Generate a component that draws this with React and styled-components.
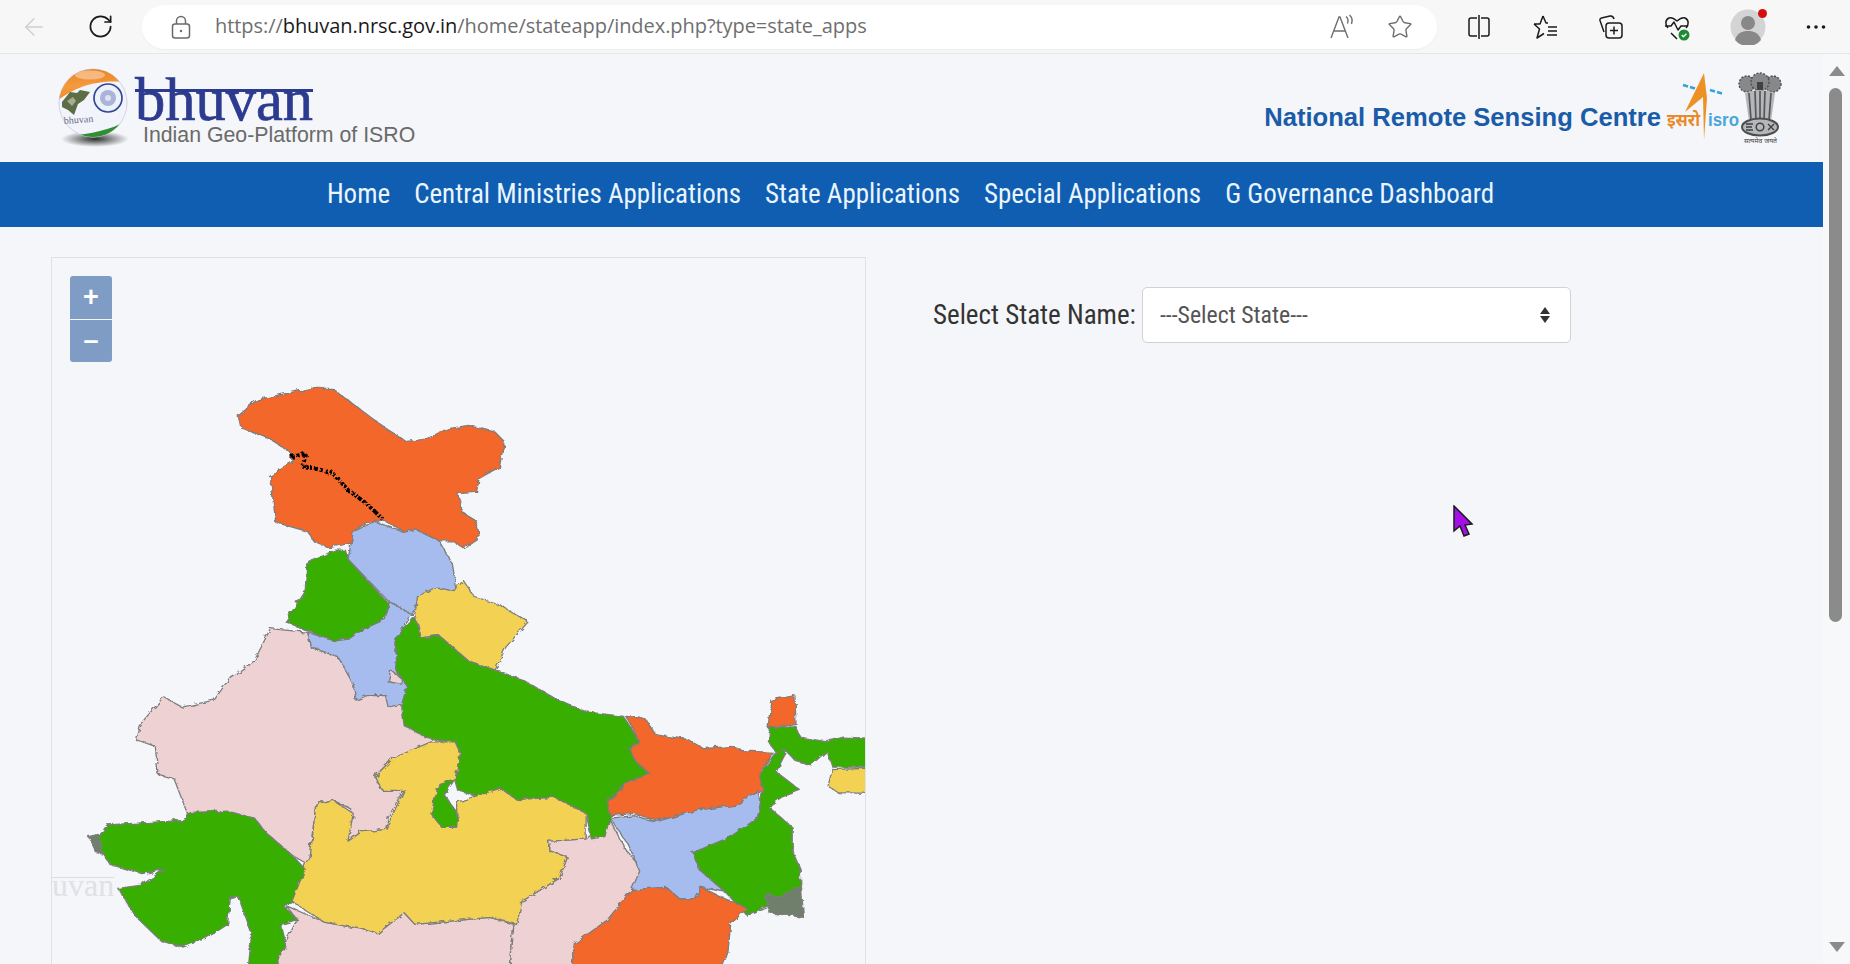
import React from "react";
import styled, { createGlobalStyle } from "styled-components";
import { ArrowLeft, RotateCw, Star } from "lucide-react";

const GlobalStyle = createGlobalStyle`
  html, body {
    margin: 0;
    padding: 0;
    height: 100%;
    overflow: hidden;
    background: #f7f7f7;
    font-family: Roboto, "Liberation Sans", sans-serif;
  }
`;

const Screen = styled.div`
  width: 1850px;
  height: 964px;
  display: flex;
  flex-direction: column;
  overflow: hidden;
  position: relative;
`;

/* browser chrome */
const Toolbar = styled.div`
  height: 53px;
  flex: none;
  display: flex;
  align-items: center;
  background: #f7f7f7;
  border-bottom: 1px solid #e6e6e6;
`;

const NavIcon = styled.div`
  width: ${(p) => p.$w || 66}px;
  height: 50px;
  flex: none;
  display: flex;
  align-items: center;
  justify-content: center;
  color: ${(p) => p.$color || "#1b1b1b"};
`;

const AddressBar = styled.div`
  width: 1295px;
  height: 44px;
  margin-left: 10px;
  padding: 0 20px 0 29px;
  box-sizing: border-box;
  flex: none;
  display: flex;
  align-items: center;
  background: #fff;
  border-radius: 22px;
  box-shadow: 0 1px 2px rgba(0, 0, 0, 0.04);
`;

const Url = styled.div`
  margin-left: 24px;
  padding-bottom: 2px;
  flex: 1;
  font-family: "Open Sans", sans-serif;
  font-size: 20px;
  letter-spacing: -0.06px;
  color: #6f6f6f;
  white-space: nowrap;
  b {
    font-weight: 400;
    color: #1a1a1a;
  }
`;

const ReadAloud = styled.svg`
  margin-right: 7px;
`;

const StarSlot = styled(NavIcon)`
  width: 34px;
  margin-left: 21px;
`;

const ToolIcons = styled.div`
  display: flex;
  align-items: center;
  margin-left: 9px;
`;

const Avatar = styled.div`
  width: 36px;
  height: 36px;
  margin: 0 40px 0 20px;
  position: relative;
`;

const RedDot = styled.span`
  position: absolute;
  top: 0;
  right: -1px;
  width: 9px;
  height: 9px;
  border-radius: 50%;
  background: #d40d0d;
`;

/* page */
const Viewport = styled.div`
  flex: 1;
  min-height: 0;
  display: flex;
  background: #f4f6f9;
  border-radius: 8px 8px 0 0;
  overflow: hidden;
`;

const Page = styled.div`
  flex: 1;
  min-width: 0;
  display: flex;
  flex-direction: column;
`;

const Header = styled.header`
  height: 108px;
  flex: none;
  display: flex;
  padding: 6px 33px 0 50px;
  box-sizing: border-box;
`;

const WordColumn = styled.div`
  margin-top: 10px;
  display: flex;
  flex-direction: column;
`;

const Wordmark = styled.svg`
  display: block;
  overflow: visible;
`;

const Tagline = styled.div`
  margin: 0 0 0 8px;
  font-family: "Liberation Sans", sans-serif;
  font-size: 21.3px;
  line-height: 20px;
  color: #6a6a6a;
  white-space: nowrap;
`;

const Nrsc = styled.div`
  margin-left: auto;
  display: flex;
  align-items: flex-start;
  gap: 4px;
`;

const NrscName = styled.div`
  margin-top: 42px;
  font-family: "Liberation Sans", sans-serif;
  font-weight: 700;
  font-size: 25.6px;
  line-height: 30px;
  color: #1a5ca8;
  white-space: nowrap;
`;

const EmblemArt = styled.svg`
  flex: none;
  margin-top: 5px;
`;

const NavBar = styled.nav`
  height: 65px;
  flex: none;
  display: flex;
  align-items: center;
  justify-content: center;
  gap: 24px;
  padding: 0 2px 2px 0;
  box-sizing: border-box;
  background: #105eb2;
`;

const NavLink = styled.a`
  font-family: "Roboto Condensed", "Liberation Sans Narrow", Roboto, sans-serif;
  font-stretch: condensed;
  font-size: 27px;
  color: #eaf5ff;
  white-space: nowrap;
`;

const Content = styled.main`
  flex: 1;
  min-height: 0;
  display: flex;
  align-items: flex-start;
  padding: 30px 0 0 51px;
`;

const MapPanel = styled.div`
  position: relative;
  width: 815px;
  height: 720px;
  flex: none;
  box-sizing: border-box;
  border: 1px solid #dfe2e5;
  overflow: hidden;
`;

const MapSvg = styled.svg`
  display: block;
  width: 813px;
  height: 707px;
`;

const ZoomControl = styled.div`
  position: absolute;
  left: 18px;
  top: 18px;
  width: 42px;
  display: flex;
  flex-direction: column;
  gap: 1px;
  border-radius: 3px;
  overflow: hidden;
`;

const ZoomButton = styled.div`
  height: 42.5px;
  display: flex;
  align-items: center;
  justify-content: center;
  background: #7f9dc4;
  color: #fff;
  font-family: "Liberation Sans", sans-serif;
  font-weight: 700;
  font-size: 27px;
`;

const Watermark = styled.div`
  position: absolute;
  left: 0;
  top: 619px;
  border-top: 1px solid #dcdee0;
  font-family: "Liberation Serif", serif;
  font-size: 32px;
  line-height: 14px;
  padding-bottom: 6px;
  color: #dfe1e4;
  white-space: nowrap;
`;

const StateForm = styled.form`
  margin: 30px 0 0 67px;
  display: flex;
  align-items: center;
  gap: 6px;
`;

const StateLabel = styled.label`
  font-family: "Roboto Condensed", "Liberation Sans Narrow", Roboto, sans-serif;
  font-stretch: condensed;
  font-size: 27px;
  color: #333;
  white-space: nowrap;
`;

const SelectBox = styled.div`
  width: 429px;
  height: 56px;
  box-sizing: border-box;
  padding: 0 19px 0 17px;
  display: flex;
  align-items: center;
  justify-content: space-between;
  background: #fff;
  border: 1px solid #d2d2d2;
  border-radius: 5px;
  font-family: "Roboto Condensed", "Liberation Sans Narrow", Roboto, sans-serif;
  font-stretch: condensed;
  font-size: 23.8px;
  color: #555;
`;

const Scrollbar = styled.div`
  width: 27px;
  flex: none;
  display: flex;
  flex-direction: column;
  align-items: center;
  background: #f7f8fa;
  padding: 12px 0 12px;
  box-sizing: border-box;
`;

const Thumb = styled.div`
  width: 13px;
  height: 534px;
  margin-top: 12px;
  margin-right: 2px;
  border-radius: 7px;
  background: #8b8b8b;
`;

const DownArrow = styled.svg`
  margin-top: auto;
`;

const Cursor = styled.svg`
  position: absolute;
  left: 1452px;
  top: 505px;
`;

const GREEN = "#37ae06";
const ORANGE = "#f3672b";
const BLUE = "#a6bcee";
const YELLOW = "#f3d152";
const PINK = "#eed2d3";
const SWAMP = "#6f7f6c";

// outlines traced off the reference, in crop coordinates
const STATES = [
  [PINK, "M430 840L500 848 505 880 555 900 600 950 670 970 680 1010 720 1060 760 1095 660 1120 625 1160 640 1190 680 1185 650 1250 645 1275 600 1280 575 1300 580 1230 545 1210 515 1220 510 1270 500 1350 470 1330 420 1280 400 1250 275 1240 250 1165 220 1155 215 1095 178 1080 185 1050 230 988 265 1010 325 995 355 945 400 910Z"],
  [PINK, "M460 1440L530 1475 600 1490 630 1500 680 1455 700 1480 840 1465 885 1480 875 1620 430 1620 455 1525 480 1470Z"],
  [PINK, "M950 1300L1020 1295 1065 1255 1090 1310 1125 1365 1130 1420 1085 1460 1040 1540 995 1560 995 1620 875 1620 885 1480 900 1430 970 1380 985 1335 950 1320Z"],
  [ORANGE, "M370 380L405 345 445 335 505 320 545 320 580 350 620 385 650 410 685 435 720 430 760 408 800 400 850 415 867 435 858 490 820 515 815 545 780 548 790 590 812 605 822 640 790 665 770 650 745 650 700 625 680 630 640 605 610 610 585 630 580 655 540 665 510 650 500 630 440 610 430 510 470 480 470 460 430 430 375 405Z"],
  [BLUE, "M585 630L625 608 680 632 700 625 745 650 770 700 778 755 705 780 695 810 650 780 575 690Z"],
  [GREEN, "M570 670L575 690 650 785 640 825 605 840 580 860 545 865 500 845 458 825 495 760 498 700 550 670Z"],
  [BLUE, "M500 848L545 865 580 860 605 840 645 820 650 780 695 810 665 860 665 930 685 965 685 1000 650 1010 645 985 610 985 590 995 585 960 555 900 505 880Z"],
  [PINK, "M655 930L672 945 675 960 650 955Z"],
  [YELLOW, "M705 770L740 750 775 760 790 735 810 770 860 790 912 825 870 880 850 930 800 910 770 880 745 855 710 860 700 810Z"],
  [GREEN, "M700 815L710 860 745 855 770 880 800 910 850 930 900 950 960 990 1020 1020 1090 1030 1120 1085 1100 1100 1115 1130 1140 1155 1100 1170 1060 1215 1065 1245 1055 1290 1030 1295 1020 1240 960 1205 890 1210 860 1185 820 1205 780 1190 775 1170 785 1110 760 1085 720 1075 680 1050 675 1005 685 965 665 930 665 860Z"],
  [YELLOW, "M730 1085L775 1085 785 1110 775 1165 745 1180 735 1230 780 1270 780 1215 860 1185 890 1210 960 1205 1020 1240 1020 1295 950 1300 950 1320 985 1335 970 1380 900 1430 890 1480 840 1465 700 1480 680 1455 630 1500 600 1490 530 1475 470 1430 495 1350 505 1330 515 1220 545 1210 585 1240 575 1300 600 1280 645 1275 680 1190 640 1190 625 1160 660 1120Z"],
  [GREEN, "M745 1175L775 1165 755 1200 780 1240 780 1270 750 1270 730 1240Z"],
  [SWAMP, "M90 1290L130 1280 125 1330 105 1325Z"],
  [GREEN, "M125 1265L270 1255 280 1238 350 1235 400 1250 420 1280 470 1330 495 1360 470 1430 455 1440 480 1470 450 1480 460 1525 420 1620 385 1620 395 1500 370 1420 355 1425 350 1480 310 1510 265 1530 225 1515 180 1465 145 1402 190 1395 230 1362 190 1370 130 1350 115 1320 110 1290Z"],
  [ORANGE, "M1095 1030L1130 1035 1150 1070 1210 1080 1240 1100 1290 1095 1320 1105 1370 1108 1345 1150 1350 1190 1300 1225 1230 1235 1150 1255 1110 1240 1065 1245 1060 1215 1100 1170 1140 1155 1115 1130 1100 1100 1120 1085Z"],
  [BLUE, "M1065 1250L1110 1245 1150 1258 1230 1232 1300 1222 1340 1190 1350 1230 1320 1280 1220 1325 1230 1360 1280 1410 1235 1400 1225 1425 1195 1425 1170 1400 1105 1405 1120 1365 1100 1310Z"],
  [GREEN, "M1345 1155L1385 1090 1395 1105 1375 1150 1420 1190 1385 1205 1360 1225 1405 1270 1405 1320 1420 1360 1422 1420 1360 1440 1320 1460 1280 1410 1230 1360 1220 1325 1290 1290 1340 1250 1350 1190Z"],
  [SWAMP, "M1355 1415L1385 1420 1422 1395 1426 1465 1395 1460 1362 1455Z"],
  [ORANGE, "M1105 1405L1170 1400 1195 1425 1225 1425 1235 1400 1280 1425 1320 1445 1290 1480 1285 1540 1260 1620 995 1620 995 1525 1060 1470Z"],
  [ORANGE, "M1365 995L1410 985 1412 1045 1360 1055Z"],
  [GREEN, "M1362 1055L1410 1050 1420 1075 1470 1085 1500 1075 1600 1080 1600 1140 1480 1140 1470 1105 1440 1135 1410 1125 1390 1100 1375 1110 1362 1085Z"],
  [YELLOW, "M1480 1145L1600 1140 1600 1198 1490 1195 1472 1180Z"],
];

function IndiaMap() {
  return (
    <MapSvg viewBox="22 38 1519 1530" preserveAspectRatio="none">
      <defs>
        <filter id="rough" x="0" y="0" width="1700" height="1700" filterUnits="userSpaceOnUse">
          <feTurbulence type="fractalNoise" baseFrequency="0.07" numOctaves="3" seed="4" />
          <feDisplacementMap in="SourceGraphic" scale="11" />
        </filter>
      </defs>
      <g filter="url(#rough)">
        {STATES.map(([fill, d], i) => (
          <path key={i} d={d} fill={fill} stroke="#7d7d7d" strokeWidth="1.3" vectorEffect="non-scaling-stroke" strokeLinejoin="round" />
        ))}
        <path d="M470 468L497 462 490 488 545 502 575 540 610 570 640 603" fill="none" stroke="#000" strokeWidth="4" strokeDasharray="3 2" vectorEffect="non-scaling-stroke" />
      </g>
    </MapSvg>
  );
}

function Globe() {
  return (
    <svg width="85" height="90" viewBox="0 0 85 90">
      <defs>
        <linearGradient id="saffron" x1="0" y1="0" x2="0" y2="1">
          <stop offset="0" stopColor="#e27a14" />
          <stop offset="0.65" stopColor="#f59a3e" />
          <stop offset="1" stopColor="#ef8a24" />
        </linearGradient>
        <radialGradient id="shade" cx="0.5" cy="0.5" r="0.5">
          <stop offset="0" stopColor="#2c2c2c" />
          <stop offset="1" stopColor="#333" stopOpacity="0" />
        </radialGradient>
        <clipPath id="ball">
          <circle cx="43" cy="43" r="34" />
        </clipPath>
      </defs>
      <ellipse cx="45" cy="79" rx="34" ry="8" fill="url(#shade)" />
      <circle cx="43" cy="43" r="34" fill="#f2f3fb" stroke="#cfd2ee" />
      <g clipPath="url(#ball)">
        <path d="M8 40C25 28 42 19 80 22V0H0V40Z" fill="url(#saffron)" />
        <ellipse cx="40" cy="15" rx="15" ry="4.500" fill="#f8c79c" opacity="0.75" />
        <path d="M20 76C40 74 62 70 78 60V90H20Z" fill="#2f8f33" />
      </g>
      <circle cx="58" cy="38" r="14" fill="#eef0fa" stroke="#2f4a94" strokeWidth="1.700" />
      <circle cx="58" cy="38" r="8" fill="#aab3d8" />
      <circle cx="58" cy="38" r="3" fill="#dfe2f2" />
      <path d="M12 42L20 32 27 33 30 30 40 32 34 40 28 44 24 55 18 50 12 47Z" fill="#5d6d45" />
      <path d="M17 41l6-4 3 4-4 5z" fill="#a7ad8e" />
      <text x="14" y="64" fontFamily="'Liberation Serif', serif" fontSize="10" fill="#6a6f8a" transform="rotate(-4 14 64)">bhuvan</text>
    </svg>
  );
}

function IsroEmblem() {
  return (
    <EmblemArt width="125" height="85" viewBox="0 0 125 85">
      <path d="M39 8L20 47 38 32 39 75 42 33Z" fill="#ee9125" />
      <path d="M18 20l5 1.500M25 22l5 1.500M45 25l5 1.500M52 27l5 1.500" stroke="#3aa1d8" strokeWidth="2.600" />
      <text x="2" y="61" textLength="33" lengthAdjust="spacingAndGlyphs" fontFamily="'Noto Sans', sans-serif" fontWeight="700" fontSize="17" fill="#e98a2a">इसरो</text>
      <text x="43" y="61" textLength="31" lengthAdjust="spacingAndGlyphs" fontFamily="'Liberation Sans', sans-serif" fontWeight="700" fontSize="18" fill="#4aa6dc">isro</text>
      <g fill="#86888a" stroke="#4c4e50" strokeWidth="1.400" strokeDasharray="2 1.500">
        <circle cx="82" cy="19" r="8" />
        <circle cx="108" cy="19" r="8" />
        <circle cx="95" cy="17" r="9" />
      </g>
      <path d="M92 17h6v8h-6z" fill="#3f4143" />
      <path d="M80 28Q95 22 110 28L106 56H84Z" fill="#b4b6b8" />
      <path d="M84 28l2 27M90 26l1 29M95 26v29M100 26l-1 29M106 28l-2 27" stroke="#55575a" strokeWidth="1.700" />
      <ellipse cx="95" cy="62" rx="18" ry="8.500" fill="#b5b7b9" stroke="#4c4e50" strokeWidth="2" />
      <circle cx="95" cy="62" r="3.800" fill="none" stroke="#3f4143" strokeWidth="1.500" />
      <path d="M81 59h7M81 62h6M81 65h7M103 59l6 6M109 59l-6 6" stroke="#3f4143" strokeWidth="1.400" />
      <text x="79" y="78" textLength="33" lengthAdjust="spacingAndGlyphs" fontFamily="'Noto Sans', sans-serif" fontSize="6.500" fill="#444">सत्यमेव जयते</text>
    </EmblemArt>
  );
}

export default function App() {
  return (
    <Screen>
      <GlobalStyle />
      <Toolbar>
        <NavIcon $w={68} $color="#cfcfcf"><ArrowLeft size={28} strokeWidth={1.2} /></NavIcon>
        <NavIcon $w={64}><RotateCw size={27} strokeWidth={1.5} /></NavIcon>
        <AddressBar>
          <svg width="20" height="24" viewBox="0 0 20 24" fill="none" stroke="#6a6a6a" strokeWidth="1.5">
            <rect x="1.5" y="9" width="17" height="14" rx="2.5" />
            <path d="M5.5 9V6a4.5 4.5 0 0 1 9 0v3" />
            <circle cx="10" cy="16" r="1.2" fill="#6a6a6a" stroke="none" />
          </svg>
          <Url>https://<b>bhuvan.nrsc.gov.in</b>/home/stateapp/index.php?type=state_apps</Url>
          <ReadAloud width="26" height="26" viewBox="0 0 26 26" fill="none" stroke="#6e6e6e" strokeWidth="1.4">
            <path d="M2 24L10 3h1l8 21M5 17h11" />
            <path d="M17 2.5c2 1.5 2.5 4 1.5 7M20.5 1c2.5 2.2 3 6 2 9" />
          </ReadAloud>
          <StarSlot $color="#6e6e6e"><Star size={26} strokeWidth={1.3} /></StarSlot>
        </AddressBar>
        <ToolIcons>
          <NavIcon>
            <svg width="24" height="26" viewBox="0 0 24 26" fill="none" stroke="#1b1b1b" strokeWidth="1.5">
              <path d="M10 4H4a2 2 0 0 0-2 2v14a2 2 0 0 0 2 2h6M14 4h6a2 2 0 0 1 2 2v14a2 2 0 0 1-2 2h-6M12 1v24" />
            </svg>
          </NavIcon>
          <NavIcon>
            <svg width="26" height="26" viewBox="0 0 26 26" fill="none" stroke="#1b1b1b" strokeWidth="1.5" strokeLinejoin="round">
              <path d="M11 2l3 7h2M4 10h4l3-8M2 10l5.500 5L5 24l7-4.500M16 13h9M16 17h9M15 21h10M2 10h6" />
            </svg>
          </NavIcon>
          <NavIcon>
            <svg width="26" height="26" viewBox="0 0 26 26" fill="none" stroke="#1b1b1b" strokeWidth="1.5" strokeLinejoin="round">
              <rect x="8" y="9" width="16" height="15" rx="3" />
              <path d="M16 12.500v8M12 16.500h8M6 18L2 6.500a2 2 0 0 1 1.500-2.500L12 2c2-.4 3.400.6 4 3" />
            </svg>
          </NavIcon>
          <NavIcon>
            <svg width="28" height="28" viewBox="0 0 28 28" fill="none" stroke="#1b1b1b" strokeWidth="1.5" strokeLinejoin="round">
              <path d="M5 15C2 12 2 6.500 6 5c3-1 5 .5 8 3 3-2.500 5-4 8-3 4 1.500 4 7 1 10" />
              <path d="M2 13h6l3-4 4 8 3-4h7M8 20l6 6" />
              <circle cx="21" cy="22" r="5.500" fill="#1f8a34" stroke="none" />
              <path d="M18.800 22l1.600 1.700 3-3" stroke="#fff" strokeWidth="1.300" />
            </svg>
          </NavIcon>
          <Avatar>
            <svg width="36" height="36" viewBox="0 0 36 36">
              <circle cx="18" cy="18" r="17.500" fill="#d4d4d4" />
              <circle cx="18" cy="14" r="7" fill="#888" />
              <path d="M5 31c2-7 7-9 13-9s11 2 13 9a17 17 0 0 1-26 0z" fill="#888" />
            </svg>
            <RedDot />
          </Avatar>
          <svg width="20" height="6" viewBox="0 0 20 6" fill="#1b1b1b">
            <circle cx="2.500" cy="3" r="1.800" />
            <circle cx="10" cy="3" r="1.800" />
            <circle cx="17.500" cy="3" r="1.800" />
          </svg>
        </ToolIcons>
      </Toolbar>
      <Viewport>
        <Page>
          <Header>
            <Globe />
            <WordColumn>
              <Wordmark width="180" height="55" viewBox="0 0 180 55">
                <rect x="0" y="19" width="178" height="3" fill="#2c3b8f" />
                <text x="0" y="50" textLength="178" lengthAdjust="spacingAndGlyphs" fontFamily="'Liberation Serif', serif" fontSize="62" fill="#2c3b8f" stroke="#2c3b8f" strokeWidth="0.7">bhuvan</text>
              </Wordmark>
              <Tagline>Indian Geo-Platform of ISRO</Tagline>
            </WordColumn>
            <Nrsc>
              <NrscName>National Remote Sensing Centre</NrscName>
              <IsroEmblem />
            </Nrsc>
          </Header>
          <NavBar>
            <NavLink>Home</NavLink>
            <NavLink>Central Ministries Applications</NavLink>
            <NavLink>State Applications</NavLink>
            <NavLink>Special Applications</NavLink>
            <NavLink>G Governance Dashboard</NavLink>
          </NavBar>
          <Content>
            <MapPanel>
              <IndiaMap />
              <ZoomControl>
                <ZoomButton>+</ZoomButton>
                <ZoomButton>–</ZoomButton>
              </ZoomControl>
              <Watermark>uvan</Watermark>
            </MapPanel>
            <StateForm>
              <StateLabel>Select State Name:</StateLabel>
              <SelectBox>
                ---Select State---
                <svg width="12" height="18" viewBox="0 0 12 18" fill="#333">
                  <path d="M6 1l5 7H1zM6 17l5-7H1z" />
                </svg>
              </SelectBox>
            </StateForm>
          </Content>
        </Page>
        <Scrollbar>
          <svg width="16" height="10" viewBox="0 0 16 10" fill="#8b8b8b"><path d="M8 0l8 10H0z" /></svg>
          <Thumb />
          <DownArrow width="16" height="10" viewBox="0 0 16 10" fill="#8b8b8b"><path d="M8 10L0 0h16z" /></DownArrow>
        </Scrollbar>
      </Viewport>
      <Cursor width="22" height="32" viewBox="0 0 22 32">
        <path d="M2 1l18 18-7 1 4 9-5 2-4-10-6 5z" fill="#a40fe8" stroke="#1a1a1a" strokeWidth="1.500" />
      </Cursor>
    </Screen>
  );
}
